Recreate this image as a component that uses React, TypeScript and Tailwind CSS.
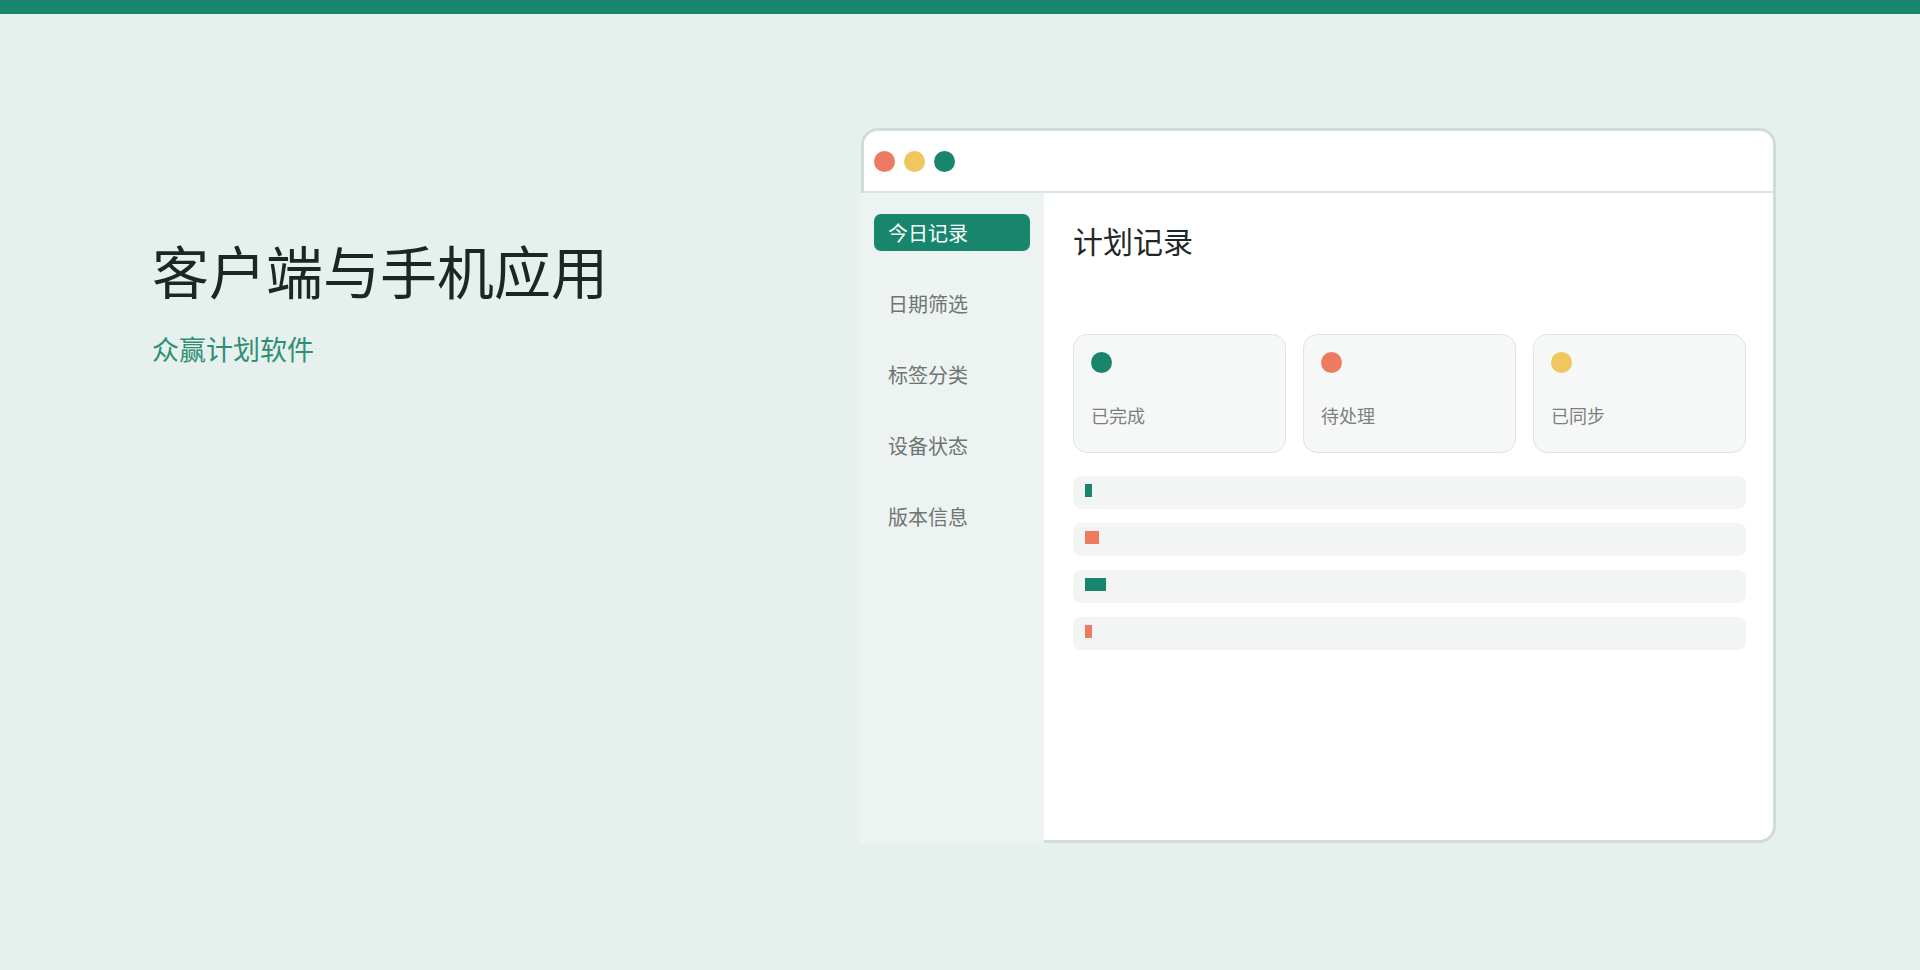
const navItems = ["今日记录", "日期筛选", "标签分类", "设备状态", "版本信息"];

const stats = [
  { label: "已完成", dot: "bg-[#17866d]" },
  { label: "待处理", dot: "bg-[#ee7a61]" },
  { label: "已同步", dot: "bg-[#f0c75e]" },
];

const bars = [
  { w: "w-[7px]", color: "bg-[#17866d]" },
  { w: "w-[14px]", color: "bg-[#ee7a61]" },
  { w: "w-[21px]", color: "bg-[#17866d]" },
  { w: "w-[7px]", color: "bg-[#ee7a61]" },
];

function AppWindow() {
  return (
    <div className="flex h-[715px] w-[915px] shrink-0 flex-col rounded-[17px] border-[3px] border-[#cfdcd8] bg-white">
      {/* title bar */}
      <div className="flex h-[62px] shrink-0 items-center gap-[9px] rounded-t-[14px] border-b-2 border-[#dbe5e2] bg-white pl-[10px]">
        <span className="h-[21px] w-[21px] rounded-full bg-[#ee7a61]" />
        <span className="h-[21px] w-[21px] rounded-full bg-[#f0c75e]" />
        <span className="h-[21px] w-[21px] rounded-full bg-[#17866d]" />
      </div>

      <div className="flex flex-1">
        <aside className="-mb-[3px] -ml-[4px] flex w-[184px] shrink-0 flex-col gap-[34px] bg-[#edf3f1] px-[14px] pt-[21px]">
          {navItems.map((item, i) => (
            <div
              key={item}
              className={
                i === 0
                  ? "flex h-[37px] items-center rounded-[7px] bg-[#17866d] pl-[14px] text-[20px] text-white"
                  : "flex h-[37px] items-center pl-[14px] text-[20px] text-[#6f7572]"
              }
            >
              {item}
            </div>
          ))}
        </aside>

        <main className="flex-1 pl-[29px] pr-[27px] pt-[29px]">
          <h1 className="text-[30px] leading-[36px] text-[#1f2826]">计划记录</h1>

          <div className="mt-[76px] grid grid-cols-3 gap-[17px]">
            {stats.map((s) => (
              <div
                key={s.label}
                className="flex h-[119px] flex-col rounded-[14px] border border-[#dfe4e2] bg-[#f6f8f7] px-[17px] pt-[17px]"
              >
                <span className={`h-[21px] w-[21px] rounded-full ${s.dot}`} />
                <span className="mt-[30px] text-[18px] leading-[24px] text-[#7b807e]">{s.label}</span>
              </div>
            ))}
          </div>

          <div className="mt-[23px] flex flex-col gap-[14px]">
            {bars.map((b, i) => (
              <div key={i} className="h-[33px] rounded-[8px] bg-[#f2f5f4] pl-[12px] pt-[8px]">
                <div className={`h-[13px] ${b.w} ${b.color}`} />
              </div>
            ))}
          </div>
        </main>
      </div>
    </div>
  );
}

export default function App() {
  return (
    <div
      className="min-h-[970px] bg-[#e6f0ed]"
      style={{ fontFamily: '"Noto Sans CJK SC", "Noto Sans", sans-serif' }}
    >
      <div className="h-[14px] bg-[#17866d]" />
      <div className="flex pl-[152px] pr-[144px] pt-[114px]">
        <div className="flex-1 pt-[108px]">
          <h2 className="text-[57px] leading-[67px] text-[#1c2623]">客户端与手机应用</h2>
          <p className="mt-[28px] text-[27px] leading-[36px] text-[#2f8f74]">众赢计划软件</p>
        </div>
        <AppWindow />
      </div>
    </div>
  );
}
